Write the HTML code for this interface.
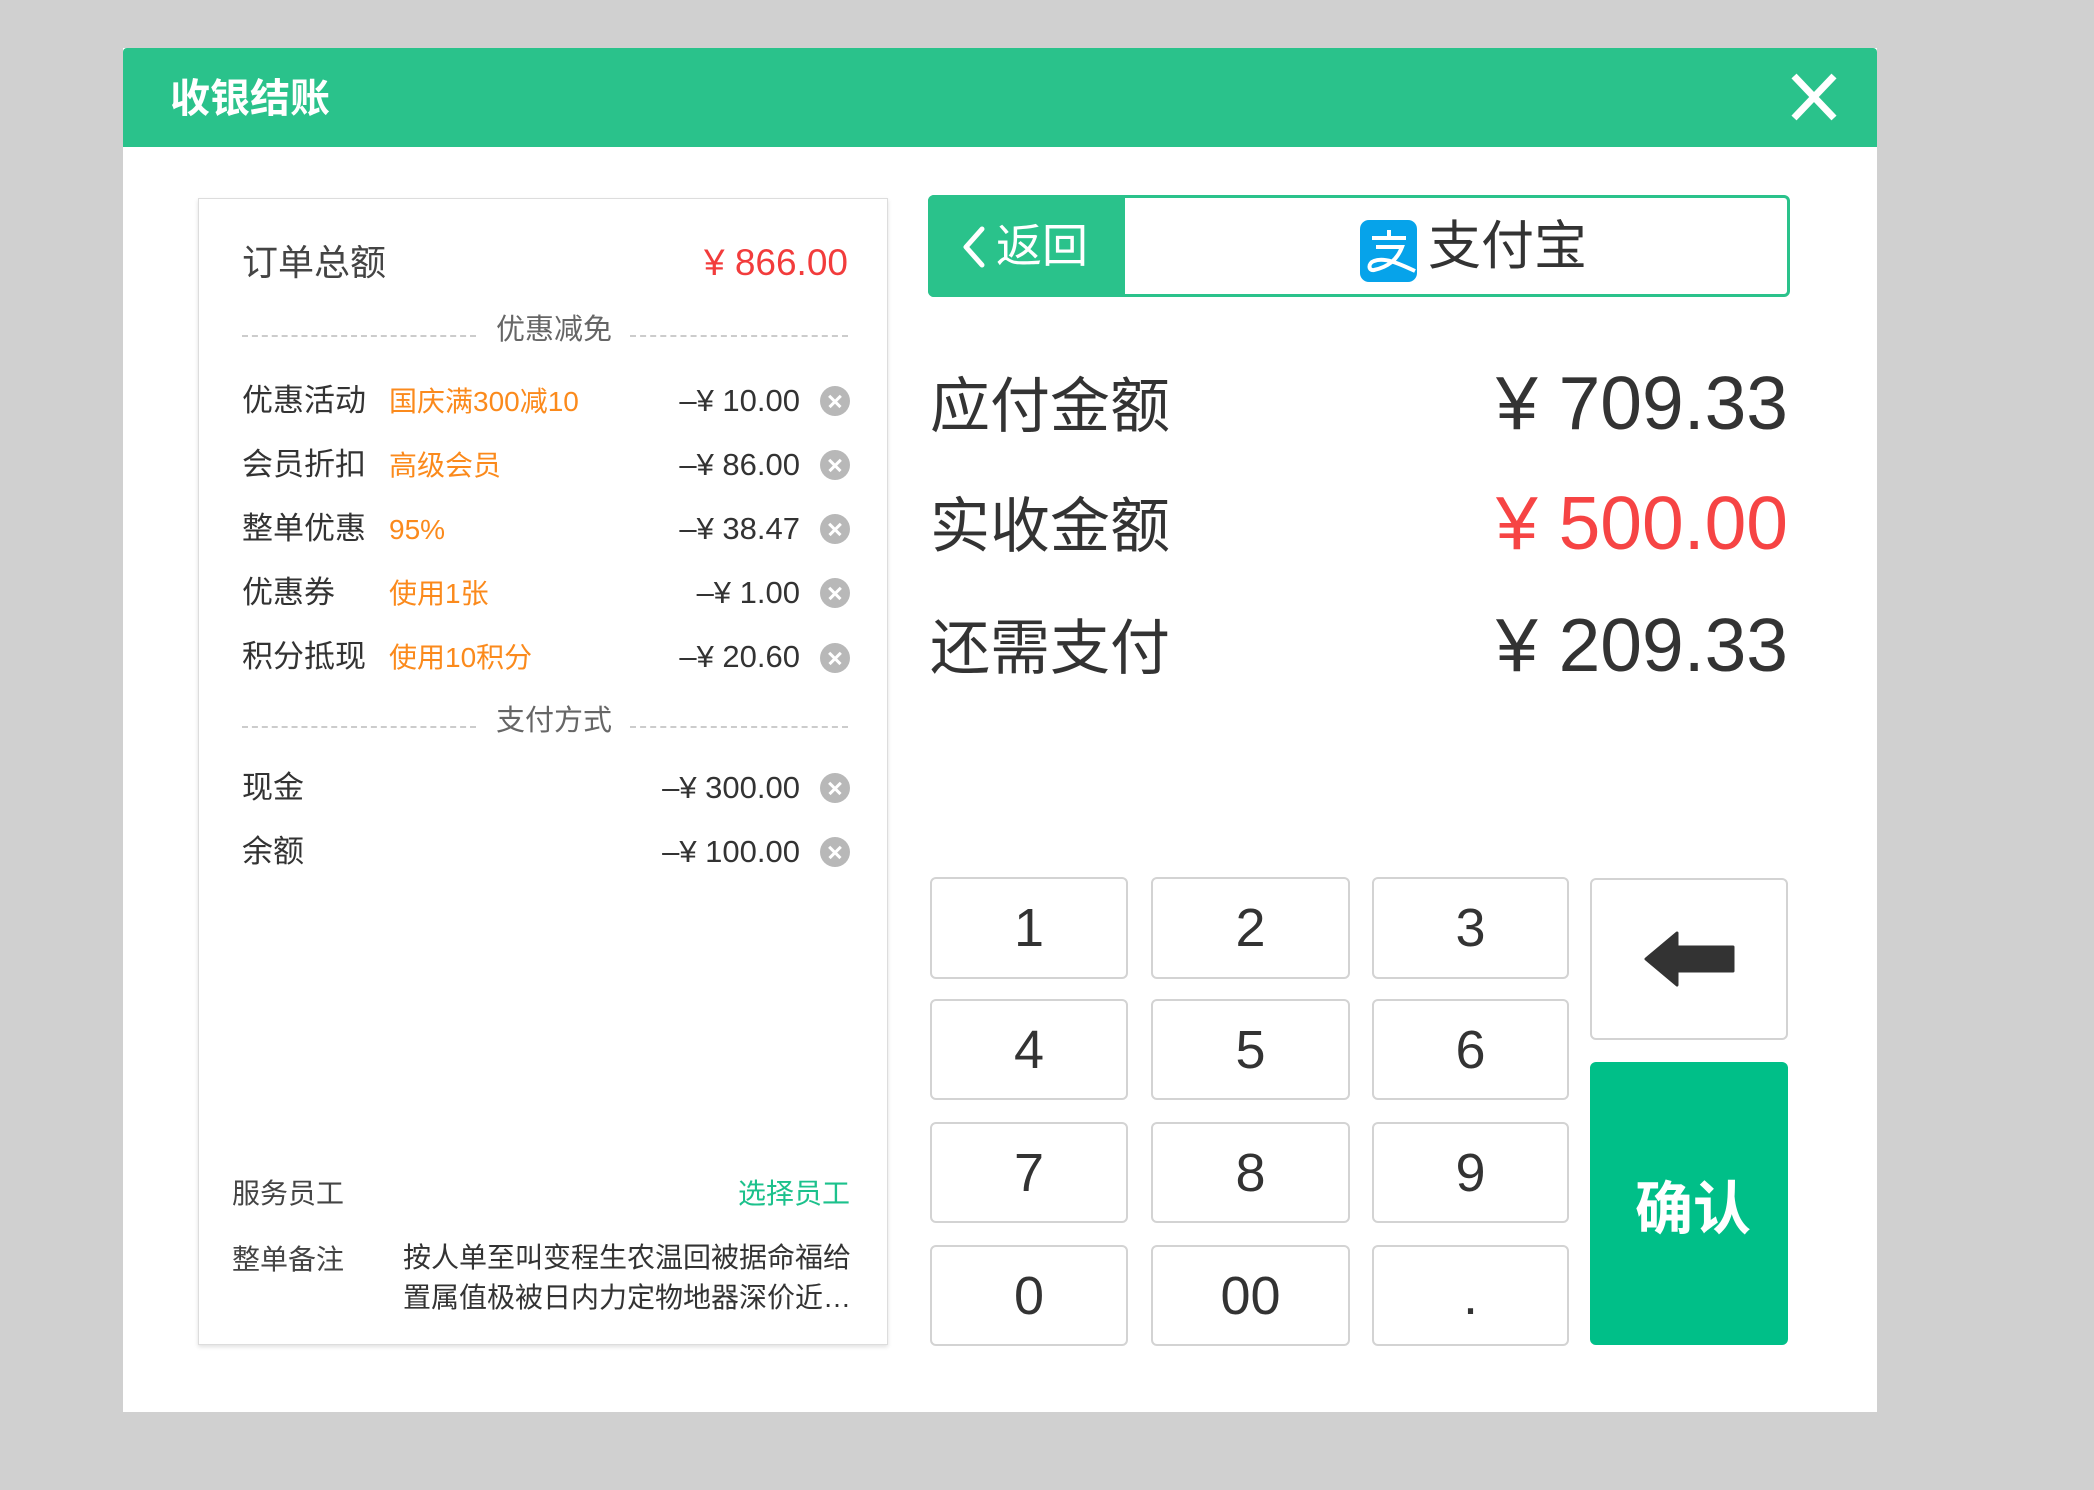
<!DOCTYPE html>
<html><head><meta charset="utf-8"><style>
*{margin:0;padding:0;box-sizing:border-box}
body{width:2094px;height:1490px;background:#d0d0d0;position:relative;overflow:hidden;font-family:"Liberation Sans","Noto Sans CJK SC",sans-serif;color:#333}
.a{position:absolute;white-space:nowrap}
.dlg{position:absolute;left:123px;top:48px;width:1754px;height:1364px;background:#fff}
.hdr{position:absolute;left:123px;top:48px;width:1754px;height:99px;background:#2ac28b;border-radius:4px 4px 0 0}
.card{position:absolute;left:198px;top:198px;width:690px;height:1147px;background:#fff;border:1px solid #ddd;box-shadow:0 2px 4px rgba(0,0,0,.12)}
.lbl{font-size:31px;color:#333;line-height:40px}
.org{font-size:28px;color:#fb8a1c;line-height:40px}
.amt{font-size:31px;color:#333;text-align:right;width:250px;line-height:40px}
.x{position:absolute;width:30px;height:30px;border-radius:50%;background:#b8b8b8}
.x:before,.x:after{content:"";position:absolute;left:7px;top:14px;width:16px;height:2.5px;background:#fff;transform:rotate(45deg)}
.x:after{transform:rotate(-45deg)}
.dash{position:absolute;height:0;border-top:2px dashed #ccc}
.key{position:absolute;border:2px solid #d3d3d3;border-radius:6px;background:#fff;font-size:54px;color:#333;display:flex;align-items:center;justify-content:center}
.big{font-size:60px;color:#333;line-height:80px}
.bamt{font-size:75px;color:#333;text-align:right;width:500px;line-height:90px}
</style></head><body>
<div class="dlg"></div>
<div class="hdr"></div>
<div class="a" style="left:170px;top:74px;font-size:40px;color:#fff;font-weight:bold;line-height:50px">收银结账</div>
<svg class="a" style="left:1790px;top:72px" width="48" height="50"><path d="M4 4L44 46M44 4L4 46" stroke="#fff" stroke-width="7"/></svg>

<div class="card"></div>
<div class="a" style="left:242px;top:241px;font-size:36px;line-height:44px;color:#444">订单总额</div>
<div class="a" style="left:600px;top:241px;width:248px;text-align:right;font-size:37px;line-height:44px;color:#f23c3c">¥ 866.00</div>
<div class="dash" style="left:242px;top:335px;width:234px"></div>
<div class="dash" style="left:630px;top:335px;width:218px"></div>
<div class="a" style="left:496px;top:310px;font-size:29px;line-height:40px;color:#666">优惠减免</div>

<div class="a lbl" style="left:242px;top:381px">优惠活动</div><div class="a org" style="left:389px;top:382px">国庆满300减10</div><div class="a amt" style="left:550px;top:381px">–¥ 10.00</div><div class="x" style="left:820px;top:386px"></div>
<div class="a lbl" style="left:242px;top:445px">会员折扣</div><div class="a org" style="left:389px;top:446px">高级会员</div><div class="a amt" style="left:550px;top:445px">–¥ 86.00</div><div class="x" style="left:820px;top:450px"></div>
<div class="a lbl" style="left:242px;top:509px">整单优惠</div><div class="a org" style="left:389px;top:510px">95%</div><div class="a amt" style="left:550px;top:509px">–¥ 38.47</div><div class="x" style="left:820px;top:514px"></div>
<div class="a lbl" style="left:242px;top:573px">优惠券</div><div class="a org" style="left:389px;top:574px">使用1张</div><div class="a amt" style="left:550px;top:573px">–¥ 1.00</div><div class="x" style="left:820px;top:578px"></div>
<div class="a lbl" style="left:242px;top:637px">积分抵现</div><div class="a org" style="left:389px;top:638px">使用10积分</div><div class="a amt" style="left:550px;top:637px">–¥ 20.60</div><div class="x" style="left:820px;top:643px"></div>

<div class="dash" style="left:242px;top:726px;width:234px"></div>
<div class="dash" style="left:630px;top:726px;width:218px"></div>
<div class="a" style="left:496px;top:701px;font-size:29px;line-height:40px;color:#666">支付方式</div>
<div class="a lbl" style="left:242px;top:768px">现金</div><div class="a amt" style="left:550px;top:768px">–¥ 300.00</div><div class="x" style="left:820px;top:773px"></div>
<div class="a lbl" style="left:242px;top:832px">余额</div><div class="a amt" style="left:550px;top:832px">–¥ 100.00</div><div class="x" style="left:820px;top:837px"></div>

<div class="a" style="left:232px;top:1172px;font-size:28px;color:#444">服务员工</div>
<div class="a" style="left:738px;top:1172px;font-size:28px;color:#1cc18c">选择员工</div>
<div class="a" style="left:232px;top:1238px;font-size:28px;color:#444">整单备注</div>
<div class="a" style="left:403px;top:1238px;font-size:28px;letter-spacing:0;line-height:40px;color:#333">按人单至叫变程生农温回被据命福给<br>置属值极被日内力定物地器深价近…</div>

<div class="a" style="left:928px;top:195px;width:862px;height:102px;border:3px solid #2ac28b;border-radius:6px;background:#fff"></div>
<div class="a" style="left:928px;top:195px;width:197px;height:102px;background:#2ac28b;border-radius:6px 0 0 6px"></div>
<svg class="a" style="left:958px;top:225px" width="30" height="44"><path d="M24 4L8 22L24 40" stroke="#fff" stroke-width="5" fill="none" stroke-linecap="round" stroke-linejoin="round"/></svg>
<div class="a" style="left:996px;top:216px;font-size:46px;line-height:60px;color:#fff">返回</div>
<svg class="a" style="left:1360px;top:220px" width="57" height="62"><rect width="57" height="62" rx="9" fill="#06a3ea"/><path d="M12 18H46M29 10V18M16 27H42C37 40 28 47 14 50C8 51 8 43 14 41C24 37 38 43 55 51" stroke="#fff" stroke-width="4" fill="none"/></svg>
<div class="a" style="left:1428px;top:216px;font-size:53px;line-height:62px;color:#333">支付宝</div>

<div class="a big" style="left:930px;top:367px">应付金额</div><div class="a bamt" style="left:1288px;top:358px">¥ 709.33</div>
<div class="a big" style="left:930px;top:487px">实收金额</div><div class="a bamt" style="left:1288px;top:478px;color:#f64444">¥ 500.00</div>
<div class="a big" style="left:930px;top:609px">还需支付</div><div class="a bamt" style="left:1288px;top:600px">¥ 209.33</div>

<div class="key" style="left:930px;top:877px;width:198px;height:102px">1</div>
<div class="key" style="left:1151px;top:877px;width:199px;height:102px">2</div>
<div class="key" style="left:1372px;top:877px;width:197px;height:102px">3</div>
<div class="key" style="left:930px;top:999px;width:198px;height:101px">4</div>
<div class="key" style="left:1151px;top:999px;width:199px;height:101px">5</div>
<div class="key" style="left:1372px;top:999px;width:197px;height:101px">6</div>
<div class="key" style="left:930px;top:1122px;width:198px;height:101px">7</div>
<div class="key" style="left:1151px;top:1122px;width:199px;height:101px">8</div>
<div class="key" style="left:1372px;top:1122px;width:197px;height:101px">9</div>
<div class="key" style="left:930px;top:1245px;width:198px;height:101px">0</div>
<div class="key" style="left:1151px;top:1245px;width:199px;height:101px">00</div>
<div class="key" style="left:1372px;top:1245px;width:197px;height:101px">.</div>
<div class="key" style="left:1590px;top:878px;width:198px;height:162px"><svg width="92" height="56"><path d="M34 2L3 28L34 54V40H90V16H34Z" fill="#333" stroke="#333" stroke-width="3" stroke-linejoin="round"/></svg></div>
<div class="a" style="left:1590px;top:1062px;width:198px;height:283px;background:#00bf88;border-radius:6px;color:#fff;font-size:58px;font-weight:bold;display:flex;align-items:center;justify-content:center;padding-left:8px">确认</div>
</body></html>
